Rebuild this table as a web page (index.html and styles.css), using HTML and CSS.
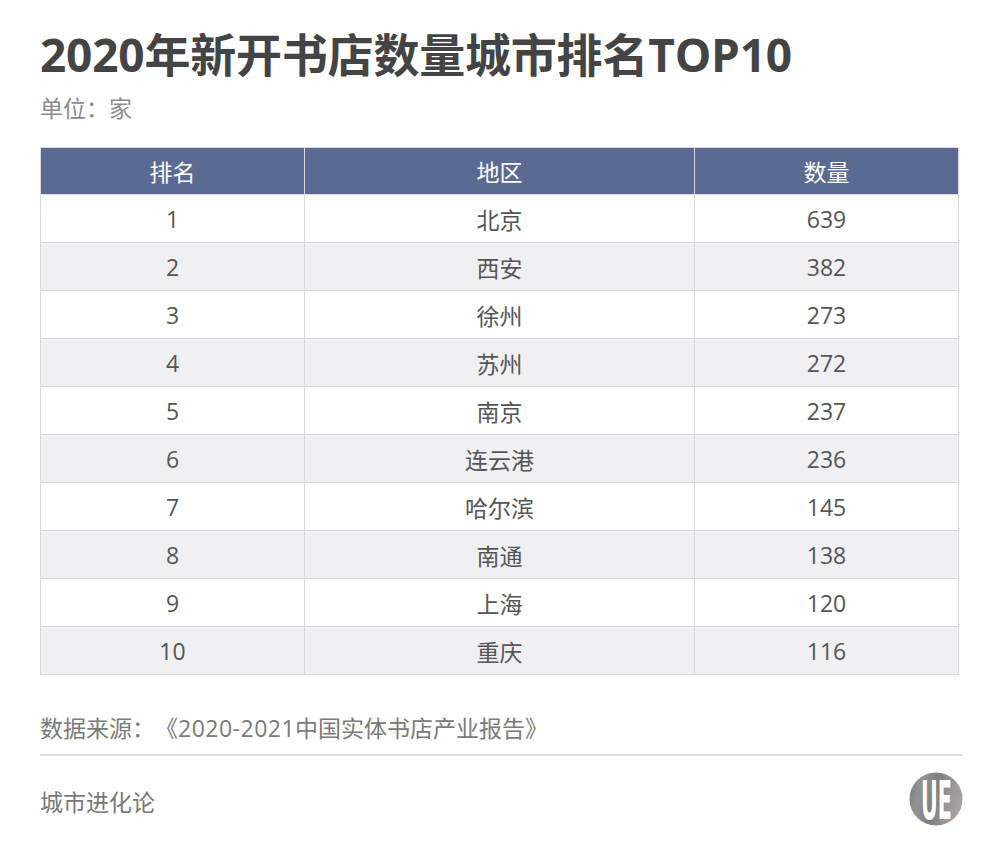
FILE: index.html
```html
<!DOCTYPE html>
<html lang="zh-CN">
<head>
<meta charset="utf-8">
<link rel="stylesheet" href="styles.css">
</head>
<body>
<div class="page">
  <h1 class="title">2020年新开书店数量城市排名TOP10</h1>
  <div class="unit">单位：家</div>
  <table class="rank">
    <thead>
      <tr><th class="c1">排名</th><th class="c2">地区</th><th class="c3">数量</th></tr>
    </thead>
    <tbody>
      <tr><td>1</td><td>北京</td><td>639</td></tr>
      <tr><td>2</td><td>西安</td><td>382</td></tr>
      <tr><td>3</td><td>徐州</td><td>273</td></tr>
      <tr><td>4</td><td>苏州</td><td>272</td></tr>
      <tr><td>5</td><td>南京</td><td>237</td></tr>
      <tr><td>6</td><td>连云港</td><td>236</td></tr>
      <tr><td>7</td><td>哈尔滨</td><td>145</td></tr>
      <tr><td>8</td><td>南通</td><td>138</td></tr>
      <tr><td>9</td><td>上海</td><td>120</td></tr>
      <tr><td>10</td><td>重庆</td><td>116</td></tr>
    </tbody>
  </table>
  <div class="source">数据来源：《<span class="num">2020-2021</span>中国实体书店产业报告》</div>
  <div class="footer">
    <span class="brand">城市进化论</span>
    <svg class="logo" width="58" height="58" viewBox="0 0 58 58">
      <defs>
        <linearGradient id="lg" x1="0" y1="0" x2="1" y2="0.2">
          <stop offset="0" stop-color="#7a7a7a"/>
          <stop offset="0.25" stop-color="#939393"/>
          <stop offset="0.55" stop-color="#7e7e7e"/>
          <stop offset="0.8" stop-color="#969696"/>
          <stop offset="1" stop-color="#a2a2a2"/>
        </linearGradient>
      </defs>
      <circle cx="29" cy="29" r="26.5" fill="url(#lg)"/>
      <text x="14" y="49" class="logo-text" textLength="31" lengthAdjust="spacingAndGlyphs">UE</text>
    </svg>
  </div>
</div>
</body>
</html>
```
FILE: styles.css
```css
html, body {
  margin: 0;
  padding: 0;
  background: #ffffff;
}
body {
  font-family: "Open Sans", "Noto Sans CJK SC", sans-serif;
  text-spacing-trim: space-all;
}
.page {
  padding: 26px 36px 0 40px;
}
.title {
  margin: 0;
  font-size: 46px;
  line-height: 56px;
  font-weight: 700;
  color: #444444;
  white-space: nowrap;
  letter-spacing: -0.2px;
}
.unit {
  margin-top: 13px;
  font-size: 23px;
  line-height: 26px;
  color: #8a8a8a;
}
.rank {
  margin-top: 26px;
  border-collapse: collapse;
  table-layout: fixed;
  font-size: 23px;
  color: #555555;
}
.rank th, .rank td {
  border: 1px solid #d9d9de;
  text-align: center;
  padding: 0;
}
.rank th {
  height: 46px;
  background: #5b6a93;
  color: #ffffff;
  font-weight: 400;
  border-color: #d6d9e2;
}
.rank .c1 { width: 263px; }
.rank .c2 { width: 389px; }
.rank .c3 { width: 263px; }
.rank td {
  height: 47px;
  background: #ffffff;
}
.rank tbody tr:nth-child(even) td {
  background: #f0f0f2;
}
.source {
  margin-top: 39px;
  font-size: 23px;
  line-height: 28px;
  color: #7a7a7a;
  padding-bottom: 12px;
  border-bottom: 2px solid #dcdcdc;
  width: 922px;
  white-space: nowrap;
}
.num {
  letter-spacing: 0.5px;
}
.footer {
  display: flex;
  align-items: center;
  justify-content: space-between;
  width: 925px;
  margin-top: 14px;
}
.brand {
  font-size: 23px;
  line-height: 28px;
  padding-top: 6px;
  color: #777777;
}
.logo {
  display: block;
  overflow: visible;
}
.logo-text {
  font-family: "DejaVu Sans Condensed", "DejaVu Sans", sans-serif;
  font-weight: 700;
  font-size: 54px;
  fill: #ffffff;
}
```
